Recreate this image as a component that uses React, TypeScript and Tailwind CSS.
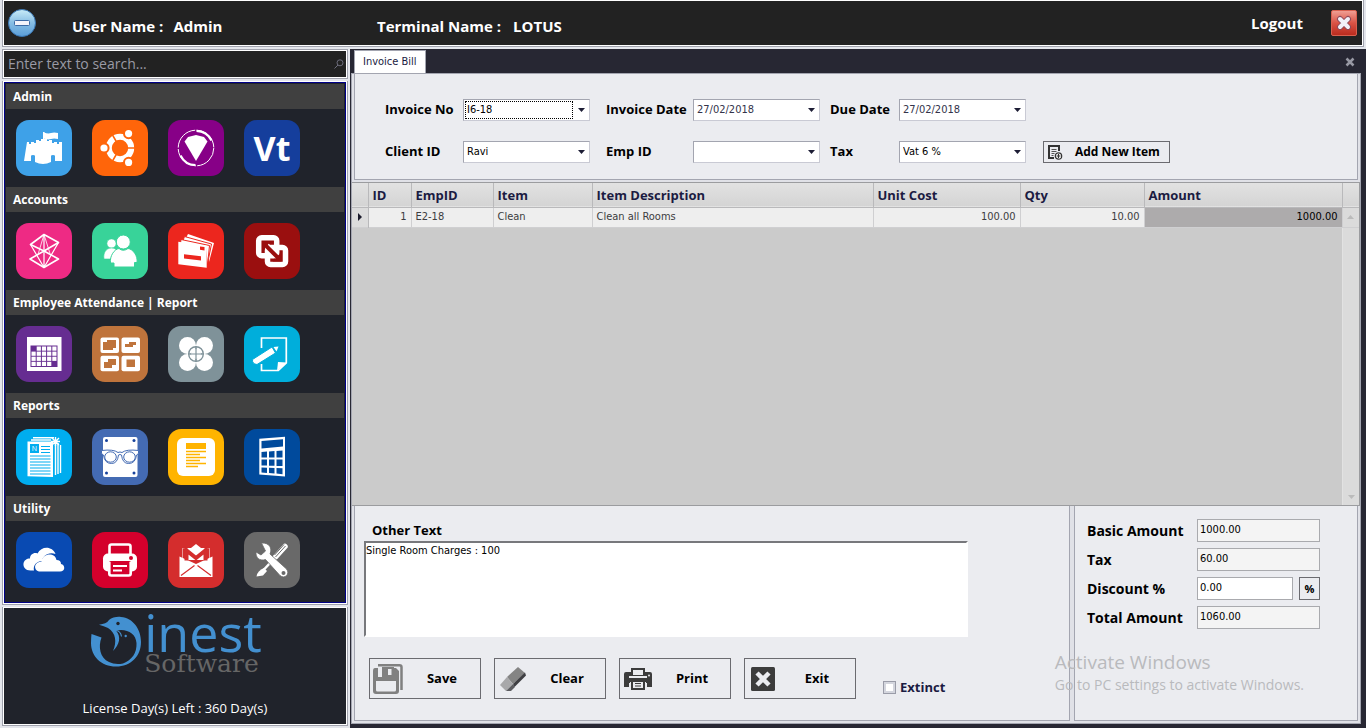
import React, { useState } from "react";

const Castle = () => (
  <>
    <path
      fill="#fff"
      d="M11 22h2v2h2v-2h3v1h2v-3h3v1h2v-2h6v2h2v-1h3v3h2v-1h3v2h2v-2h3v19h-7v-5q0-1-2-1t-2 1v6q-4 2-8 2t-8-2v-6q0-1-2-1t-2 1v5h-7z"
    />
    <path fill="#fff" d="M27 12h1.5v9H27z" />
    <path fill="#fff" d="M28 12.500q4 1.500 7 .5t7 0v6q-4-1-7 0t-7-.5z" />
  </>
);

const Circle = () => (
  <>
    <circle cx="28" cy="28" r="11.2" fill="none" stroke="#fff" strokeWidth="6" />
    <path stroke="#ff650a" strokeWidth="1.6" d="M28 28h18M28 28l-9-15.6M28 28l-9 15.6" />
    {[
      [12, 28],
      [36.6, 13.6],
      [36.6, 42.4],
    ].map(([x, y]) => (
      <circle key={`${x}-${y}`} cx={x} cy={y} r="4.6" fill="#fff" stroke="#ff650a" strokeWidth="2" />
    ))}
    <circle cx="28" cy="28" r="7.4" fill="#ff650a" />
  </>
);

const Gem = () => (
  <>
    <path fill="#fff" d="M16.500 21.500 20 17l8-2 8 2 3.500 4.500L28 41z" />
    <g fill="none" stroke="#fff">
      <circle cx="28" cy="28" r="17.800" strokeWidth="1" strokeDasharray="26.500 1.500" />
      <path strokeWidth="2.200" d="M28.500 10.800A17.200 17.200 0 0 1 43.500 20.500" />
      <path strokeWidth="2.200" d="M27.500 45.200A17.200 17.200 0 0 1 12.500 35.500" />
    </g>
  </>
);

const Letters = () => (
  <text
    x="28"
    y="41"
    textAnchor="middle"
    fill="#fff"
    fontSize="34"
    fontWeight="700"
    fontFamily="'Open Sans', sans-serif"
  >
    Vt
  </text>
);

const Polyhedron = () => (
  <g fill="none" stroke="#fff" strokeWidth="1.600" strokeLinejoin="round">
    <path d="M28 11.500 14.500 21.500 28 28l14.500-8.500zM14 36l14-8 14.500 8L28 44.500z" />
    <path d="M28 11.500v33M14.500 21.500 28 44.500l14.500-25" strokeWidth="1.200" />
    <path d="m28 11.500-6 20M28 11.500l6 19" strokeWidth=".8" />
  </g>
);

const People = () => (
  <g fill="#fff" stroke="#38d399">
    <circle cx="19.500" cy="20.500" r="4.600" strokeWidth=".6" />
    <path strokeWidth=".6" d="M12 36c-1-6 2-11 7.500-11s7 4 7 8l-5 3z" />
    <circle cx="31.300" cy="19" r="7" strokeWidth="1" />
    <path
      strokeWidth="1"
      d="M22 44v-4h-3.500c-1-7 4-14 8.500-14.500q4 3.500 9 0C41 26 46 33 45 39.500h-2.500V44z"
    />
  </g>
);

const Envelopes = () => (
  <>
    <path fill="#fff" d="m20 11 26 9-5 19-3-18-20-6z" />
    <path stroke="#ec261e" strokeWidth="1" fill="#fff" d="m16.500 13.500 27 7.500-4 20-3-18-22-4z" />
    <path stroke="#ec261e" strokeWidth="1" fill="#fff" d="m13 16.500 28.500 6-2 20-2-18-25-4z" />
    <path fill="#fff" d="m10.300 18.700 28.400 4v22l-28.400-3.400z" />
    <path fill="#ec261e" d="m32 23.500 4.500.6v3.300l-4.500-.6zM16 31.300l17 2v4.200l-17-2z" />
  </>
);

const Squares = () => (
  <>
    <g fill="none" stroke="#fff" strokeWidth="5.500">
      <rect x="14.700" y="14.700" width="18" height="18" rx="3" />
      <rect x="23.500" y="24.500" width="18" height="17" rx="3" />
    </g>
    <path stroke="#fff" strokeWidth="6" d="m22 22 13 13" />
    <path
      fill="#9a0f0f"
      d="M18 18.500h9l-3.200 3.200 10.500 10.500 3.200-3.200v9.500h-9l3.200-3.200-10.500-10.500-3.200 3.200z"
    />
  </>
);

const Calendar = () => (
  <>
    <path fill="#fff" d="M11 11h34.500v34H11z" />
    <path fill="#662d91" d="M14.500 19.500h27V41h-27z" />
    {[0, 1, 2, 3].map((row) =>
      [0, 1, 2, 3, 4].map((col) =>
        (row === 0 && col === 0) || (row === 3 && col === 4) ? null : (
          <rect
            key={`${row}${col}`}
            x={15.5 + col * 5.2}
            y={20.5 + row * 5.1}
            width="4.200"
            height="4.200"
            fill="#fff"
          />
        )
      )
    )}
  </>
);

const Boxes = () => (
  <>
    <g fill="#fff">
      <rect x="8.500" y="11.500" width="18.500" height="15.500" rx="2" />
      <rect x="29.500" y="11.500" width="18.500" height="15.500" rx="2" />
      <rect x="8.500" y="29.700" width="18.500" height="15.500" rx="2" />
      <rect x="29.500" y="29.700" width="18.500" height="15.500" rx="2" />
    </g>
    <path
      fill="#bf743c"
      d="M15 14h9v8h-3v2H11v-8h4zM37 16h7v3h-3v2h-8v-3h4zM16 33h8v6h-4v3h-8v-6h4zM34.500 33.500h8.500v7.500h-8.500z"
    />
  </>
);

const Drone = () => (
  <>
    <g fill="#fff">
      <circle cx="19.500" cy="19.500" r="8.500" />
      <circle cx="36.500" cy="19.500" r="8.500" />
      <circle cx="19.500" cy="36.500" r="8.500" />
      <circle cx="36.500" cy="36.500" r="8.500" />
    </g>
    <circle cx="28" cy="28" r="5" fill="#fff" />
    <circle cx="28" cy="28" r="7.300" fill="none" stroke="#7f9299" strokeWidth="1.400" />
    <path stroke="#7f9299" strokeWidth="1.200" d="M28 20.500v15M20.500 28h15" />
  </>
);

const NotePencil = () => (
  <>
    <path fill="none" stroke="#fff" strokeWidth="1.700" d="M17.500 22V12h24.800v25l-8 7.500H17.500V38" />
    <path fill="#fff" d="m33 45 1-9 9 .5z" />
    <path fill="#fff" stroke="#00aedb" d="M8.500 33.500 28 21l3.500 6L13 38.500q-5-.5-4.500-5z" />
    <path fill="#fff" d="m29.500 21 5-.5-2 5z" />
  </>
);

const Newspaper = () => (
  <>
    <path fill="none" stroke="#fff" strokeWidth="1.400" d="M15 11h20M17 8.800h21M39.500 12v34M42 14v31M44.500 16v28" />
    <path fill="#fff" d="M11.500 12.500H37V48l-25.500-.8z" />
    <path fill="#00adef" d="M14 15h9v9h-9z" />
    <text x="18.500" y="22" textAnchor="middle" fill="#fff" fontSize="7" fontFamily="'Open Sans', sans-serif">
      N
    </text>
    <path
      stroke="#00adef"
      strokeWidth="1.200"
      d="M25 17.500h9M25 20.500h9M25 23.500h9M14 27h20.500M14 30h20.500M14 33h20.500M14 36h20.500M14 39h20.500M14 42h20.500M14 45h20.500"
    />
    <path stroke="#fff" strokeWidth="1.400" d="m36 9 7 7m0-7-7 7m3.500-8v9m-4.500-4.500h9" />
  </>
);

const Glasses = () => (
  <>
    <rect x="11" y="8" width="34.500" height="40" rx="2" fill="#fff" />
    <g fill="#18439c">
      <circle cx="14.500" cy="11.500" r="1.500" />
      <circle cx="42" cy="11.500" r="1.500" />
      <circle cx="14.500" cy="44" r="1.500" />
      <circle cx="42" cy="44" r="1.500" />
    </g>
    <g fill="#fff" stroke="#446bb3" strokeWidth="1">
      <path d="M9.500 21.500q12-1.500 16.500 2 2-1 4 0 4.500-3.500 16.500-2v3l-2 1.500q-1 8.500-8 8.500-6 0-7-8.500-1.500-1-3 0-1 8.500-7 8.500-7 0-8-8.500l-2-1.500z" />
      <ellipse cx="18.500" cy="28" rx="5.800" ry="5.200" />
      <ellipse cx="37.500" cy="28" rx="5.800" ry="5.200" />
    </g>
  </>
);

const Document = () => (
  <>
    <rect x="9" y="9" width="38" height="38" rx="6" fill="#fff" />
    <path fill="#ffb400" d="M18 14h20v6H18z" />
    <path
      stroke="#ffb400"
      strokeWidth="1.300"
      d="M18 22.500h20M18 25.500h14M18 28.500h20M18 31.500h14M18 34.500h20M18 37.500h12"
    />
  </>
);

const Calculator = () => (
  <>
    <path fill="#fff" d="m15.300 9.800 25.700-2V47.500l-25.700-2z" />
    <path fill="#004a9c" d="m17.500 12 21.500-1.800v7.300l-21.500 2z" />
    <path
      fill="#004a9c"
      d="m17.500 23 5.500-.4v5.800h-5.500zM25 22.500l5.500-.4v6.300H25zM32.500 22l6-.4v6.800h-6zM17.500 30.500H23v6h-5.500zM25 30.500h5.500v6.300H25zM32.500 30.500h6v6.500h-6zM17.500 38.500l5.500.2v5.300l-5.500-.5zM25 38.800l5.500.2v5.600l-5.500-.5zM32.500 39l6 .2v6l-6-.6z"
    />
  </>
);

const Clouds = () => (
  <>
    <path
      fill="#fff"
      d="M18 38.500h-3.500c-5 0-7.500-3.500-7-7 .5-3 3-5 6.500-5 0-4 4-6.500 7.500-5 4-8 15-7.500 18 .5-8-2.500-13 3-13.500 7-6 .5-9 4.500-8 9.500z"
    />
    <path
      fill="#fff"
      d="M24 39.500c-6 0-7.500-9 1.500-10 1-8.500 13.500-9.500 15-1.500 3 0 4.500 1.500 4.500 4 4.500 1 4.500 7.500-1 7.500z"
    />
  </>
);

const PrinterTile = () => (
  <>
    <path fill="none" stroke="#fff" strokeWidth="2.600" d="M17.500 22v-7.500q0-2 2-2h17q2 0 2 2V22" />
    <rect x="11" y="21.500" width="34" height="18" rx="5" fill="#fff" />
    <rect x="17" y="29" width="22" height="16" rx="2" fill="#d4002c" />
    <path fill="none" stroke="#fff" strokeWidth="2.600" d="M17.300 30v11.500q0 2 2 2h17.400q2 0 2-2V30" />
    <path stroke="#fff" strokeWidth="2" d="M21 34h14M21 38.500h9" />
    <circle cx="39" cy="26" r="2" fill="#d4002c" />
  </>
);

const Mail = () => (
  <>
    <path fill="#fff" d="M14 16h28v12H14z" opacity=".5" />
    <path fill="#d42d2d" d="M15 16.500h26V29H15z" />
    <path fill="#fff" d="M19.500 16H23l5-4 5 4h3.500v12h-17z" />
    <path fill="#fff" d="M11.500 24.500 28 32l16.500-7.500V45h-33z" />
    <path fill="none" stroke="#d42d2d" strokeWidth="4" d="M18.500 28.500V18.500L28 26l9.500-7.500v10" />
    <path fill="none" stroke="#d42d2d" strokeWidth="1.200" d="m13 43.500 13.500-10M43 43.500 29.500 33.500" />
  </>
);

const Tools = () => (
  <>
    <path stroke="#fff" strokeWidth="5.500" strokeLinecap="round" d="M41 14.500 31.500 25" />
    <path stroke="#696969" strokeWidth="1" d="m41.500 14-10 11m8.500-12.500-9.500 10.500" />
    <path stroke="#fff" strokeWidth="2.500" d="M27 30 19.500 38" />
    <path fill="#fff" d="m20 36 3 3-4 4.500-6.500 1q1-6 7.500-8.500z" />
    <path
      fill="#fff"
      stroke="#696969"
      strokeWidth=".8"
      d="M17.500 11c8-.5 11 5.500 8.500 11l16.500 15c4 5-2 10.500-6.500 6.500L21.500 27.500c-6 2-10-2-9.500-7.500l5 3 4.500-4z"
    />
    <circle cx="39.500" cy="41" r="2" fill="#696969" />
  </>
);

const Bird = () => (
  <svg viewBox="0 0 52 52" className="h-13 w-13" aria-hidden="true">
    <path
      fill="#4390d0"
      d="M9 8.700C14 8 17 7 19 4c3-3 9-3.500 12-3 12 1 20 12 20 25 0 14-10 24.500-25 24.500S1 40 1 27q0-5 .5-9l10 3.500C8 31 10 42 19 46q6 3 14 1.500c9-3.500 14-10.500 13.500-20.500-.5-8-7-13-15.500-13l-5 .5c5.500 6.500 3.500 14-3 20.500 4-9 3-18-5-23q-4-2-9-3.300z"
    />
    <circle cx="28" cy="7.500" r="1.700" fill="#20232b" />
    <circle cx="35.700" cy="20" r="1.200" fill="#4390d0" />
    <path fill="none" stroke="#4390d0" strokeWidth="1.200" d="M26 14.500q4.500.5 5.500 6" />
  </svg>
);

const Arrow = ({ className = "" }: { className?: string }) => (
  <svg viewBox="0 0 7 4" className={`h-1 w-[7px] ${className}`} aria-hidden="true">
    <path fill="currentColor" d="M0 0h7L3.500 4z" />
  </svg>
);

const SelectField = ({
  id,
  options,
  focused,
}: {
  id: string;
  options: string[];
  focused?: boolean;
}) => (
  <div className="relative w-[127px]">
    <select
      id={id}
      className="block h-[22px] w-full appearance-none border border-[#c9cad4] border-t-[#a3a5b0] border-l-[#a3a5b0] bg-white px-[3px] font-['DejaVu_Sans_Condensed','Noto_Sans',sans-serif] text-[11px] font-normal leading-5 text-black outline-none"
    >
      {options.map((option) => (
        <option key={option}>{option}</option>
      ))}
    </select>
    {focused && (
      <span className="pointer-events-none absolute inset-y-0.5 left-0.5 right-[17px] border border-dotted border-black" />
    )}
    <Arrow className="pointer-events-none absolute right-[5px] top-[9px] text-[#1d1d35]" />
  </div>
);

const DateField = ({ id, value }: { id: string; value: string }) => (
  <div className="flex h-[22px] w-[127px] items-center border border-[#c9cad4] border-t-[#a3a5b0] border-l-[#a3a5b0] bg-white pr-1">
    <input
      id={id}
      defaultValue={value}
      className="min-w-0 flex-1 px-[3px] font-['DejaVu_Sans_Condensed','Noto_Sans',sans-serif] text-[11px] font-normal text-[#33334a] outline-none"
    />
    <button type="button" aria-label="Open calendar" className="flex h-full items-center">
      <Arrow className="text-[#1d1d35]" />
    </button>
  </div>
);

const Sidebar = () => (
  <aside className="flex w-[350px] shrink-0 flex-col gap-0.5 px-0.5 pb-0.5">
    <div className="border border-[#a0a2ad] bg-white p-px">
      <label className="flex h-[26px] items-center bg-[#222] px-0.5">
        <input
          type="search"
          aria-label="Search"
          placeholder="Enter text to search..."
          className="min-w-0 flex-1 bg-transparent pl-0.5 text-sm text-white outline-none placeholder:text-[#9a9aa5]"
        />
        <svg viewBox="0 0 10 10" className="h-2.5 w-2.5" fill="none" stroke="#6d6d7c" aria-hidden="true">
          <circle cx="6" cy="3.800" r="3" />
          <path d="M4 6 .5 9.500" />
        </svg>
      </label>
    </div>

    <div className="flex-1 border border-t-0 border-[#a0a2ad] bg-white p-px">
      <nav className="h-full border border-[#000087] bg-[#20232b] p-px">
        {sections.map((section) => (
          <section key={section.title}>
            <h2 className="h-[25px] bg-[#404040] pl-[7px] pt-px text-xs font-bold leading-6 text-white">
              {section.title}
            </h2>
            <div className="flex gap-5 px-2.5 py-[11px]">
              {section.tiles.map((tile) => (
                <button key={tile.name} type="button" aria-label={tile.name}>
                  <svg viewBox="0 0 56 56" className="block h-14 w-14">
                    <rect width="56" height="56" rx="13" fill={tile.color} />
                    <tile.Icon />
                  </svg>
                </button>
              ))}
            </div>
          </section>
        ))}
      </nav>
    </div>

    <div className="border border-t-0 border-[#a0a2ad] bg-white p-px">
      <div className="flex h-[116px] flex-col items-center bg-[#20232b]">
        <div className="flex h-[86px] items-start pl-0.5 pt-2">
          <Bird />
          <div className="ml-0.5">
            <p className="text-[52px] leading-8 text-[#4390d0]">inest</p>
            <p className="pt-1 font-['DejaVu_Serif',serif] text-[25px] leading-6 text-[#666]">
              Software
            </p>
          </div>
        </div>
        <p className="text-[13px] leading-7 text-white">License Day(s) Left : 360 Day(s)</p>
      </div>
    </div>
  </aside>
);

const InvoiceForm = () => (
  <form className="mx-0.5 mb-0.5 border border-[#a3a5b0] border-t-0 bg-[#ebecf0] pb-4 pl-[30px] pt-[25px]">
    <div className="grid grid-cols-[78px_143px_87px_137px_69px_144px_127px] items-center gap-y-5 text-[13px] font-bold">
      <label htmlFor="invoice-no">Invoice No</label>
      <SelectField id="invoice-no" options={["I6-18"]} focused />
      <label htmlFor="invoice-date">Invoice Date</label>
      <DateField id="invoice-date" value="27/02/2018" />
      <label htmlFor="due-date">Due Date</label>
      <DateField id="due-date" value="27/02/2018" />
      <span />
      <label htmlFor="client-id">Client ID</label>
      <SelectField id="client-id" options={["Ravi"]} />
      <label htmlFor="emp-id">Emp ID</label>
      <SelectField id="emp-id" options={[""]} />
      <label htmlFor="tax-rate">Tax</label>
      <SelectField id="tax-rate" options={["Vat 6 %"]} />
      <button
        type="button"
        className="flex h-[22px] items-center gap-3 border border-[#6b6b70] px-1 text-xs font-bold"
      >
        <svg viewBox="0 0 15 15" className="h-[15px] w-[15px]" aria-hidden="true">
          <path fill="none" stroke="#333" strokeWidth="2" d="M6 13H1V1h10v5" />
          <path stroke="#555" d="M3.500 4.500h5M3.500 6.500h5M3.500 8.500h3M3.500 10.500h2" />
          <circle cx="10.500" cy="11" r="3.200" fill="#fff" stroke="#333" strokeWidth="1.200" />
          <path stroke="#333" strokeWidth="1.200" d="M8.500 11h4M10.500 9v4" />
        </svg>
        Add New Item
      </button>
    </div>
  </form>
);

const headClass =
  "border-r border-[#b9b9bb] pl-1 text-left align-middle text-[13px] leading-5 font-bold text-[#1b1b42]";
const cellClass = "border-r border-[#cfcfd1] px-1";

const ItemsTable = () => (
  <div className="flex flex-1 flex-col border border-[#9b9c9f] border-l-0 bg-[#cbcbcb]">
    <table className="w-full table-fixed border-collapse">
      <colgroup>
        <col className="w-4" />
        <col className="w-[43px]" />
        <col className="w-[82px]" />
        <col className="w-[99px]" />
        <col />
        <col className="w-[147px]" />
        <col className="w-[124px]" />
        <col className="w-[198px]" />
        <col className="w-[17px]" />
      </colgroup>
      <thead>
        <tr className="h-6 border-b border-[#b9b9bb] bg-linear-to-b from-[#e2e2e2] to-[#d4d4d4]">
          <th className={headClass} />
          {columns.map((column) => (
            <th key={column} scope="col" className={headClass}>
              {column}
            </th>
          ))}
          <th />
        </tr>
      </thead>
      <tbody>
        <tr className="h-5 border-b border-[#cfcfd1] bg-[#eee] font-['DejaVu_Sans_Condensed','Noto_Sans',sans-serif] text-[11px] leading-4 text-[#3c3c40]">
          <td className="border-r border-[#b9b9bb] bg-[#dcdcdc]">
            <svg viewBox="0 0 4 8" className="mx-auto h-2 w-1" aria-hidden="true">
              <path fill="#1b1b2c" d="M0 0v8l4-4z" />
            </svg>
          </td>
          <td className={`${cellClass} text-right`}>1</td>
          <td className={cellClass}>E2-18</td>
          <td className={cellClass}>Clean</td>
          <td className={cellClass}>Clean all Rooms</td>
          <td className={`${cellClass} text-right`}>100.00</td>
          <td className={`${cellClass} text-right`}>10.00</td>
          <td className={`${cellClass} bg-[#adabac] text-right text-black`}>1000.00</td>
          <td className="bg-[#dbdbdb]">
            <Arrow className="mx-auto rotate-180 text-[#bbb]" />
          </td>
        </tr>
      </tbody>
    </table>
    <div className="flex flex-1">
      <div className="flex-1" />
      <div className="flex w-[17px] flex-col items-center justify-end border-l border-[#e2e2e2] bg-[#dbdbdb] pb-1.5">
        <Arrow className="text-[#bbb]" />
      </div>
    </div>
  </div>
);

const OtherText = () => {
  const [extinct, setExtinct] = useState(false);

  return (
    <div className="flex-1 border border-t-0 border-[#a3a5b0] bg-[#ebecf0] pb-5 pl-[9px] pr-5 pt-3.5">
      <label htmlFor="other-text" className="block pb-px pl-2 text-[13px] font-bold leading-5">
        Other Text
      </label>
      <textarea
        id="other-text"
        defaultValue="Single Room Charges : 100"
        className="block h-24 w-full max-w-[604px] resize-none border-2 border-white border-l-[#77787c] border-t-[#77787c] bg-white font-['DejaVu_Sans_Condensed','Noto_Sans',sans-serif] text-[11px] leading-4 text-black outline-none"
      />
      <div className="mb-px mt-[21px] flex items-start gap-[13px] pl-[5px]">
        {actions.map(({ label, icon }) => (
          <button
            key={label}
            type="button"
            className="flex h-[41px] w-28 items-center border border-[#6b6b70] pl-0.5 text-[13px] font-bold"
          >
            {icon}
            <span className="flex-1 text-center">{label}</span>
          </button>
        ))}
        <label className="ml-3.5 mt-5 flex items-center gap-1 text-[13px] font-bold leading-[18px] text-[#1b1b42]">
          <input
            type="checkbox"
            checked={extinct}
            onChange={(e) => setExtinct(e.target.checked)}
            className="h-[13px] w-[13px] appearance-none border border-[#9a9ca8] bg-white shadow-[inset_0_0_0_2px_#d4d6de] checked:bg-[#1b1b42]"
          />
          Extinct
        </label>
      </div>
    </div>
  );
};

const amountInput =
  "h-[23px] border border-[#a9aaae] px-0.5 pb-0.5 font-['DejaVu_Sans_Condensed','Noto_Sans',sans-serif] text-[11px] font-normal text-black outline-none";

const Totals = () => (
  <div className="w-[284px] border border-t-0 border-[#a3a5b0] bg-[#ebecf0] pl-3 pt-[13px]">
    <div className="grid grid-cols-[110px_123px] items-center gap-y-1.5 text-sm font-bold">
      <label htmlFor="basic">Basic Amount</label>
      <input id="basic" readOnly value="1000.00" className={`${amountInput} bg-[#f4f4f4]`} />
      <label htmlFor="tax">Tax</label>
      <input id="tax" readOnly value="60.00" className={`${amountInput} bg-[#f4f4f4]`} />
      <label htmlFor="discount">Discount %</label>
      <div className="flex gap-1.5">
        <input id="discount" defaultValue="0.00" className={`${amountInput} w-24 bg-white`} />
        <button type="button" className="h-[23px] flex-1 border border-[#6b6b70] text-[11px] font-bold">
          %
        </button>
      </div>
      <label htmlFor="total">Total Amount</label>
      <input id="total" readOnly value="1060.00" className={`${amountInput} bg-[#f4f4f4]`} />
    </div>
  </div>
);

const App = () => {
  return (
    <div className="relative flex min-h-screen flex-col bg-[#e4e6ec] font-['Open_Sans',sans-serif] text-black">
      <header className="mx-0.5 mb-0.5 border border-t-0 border-[#a0a2ad] bg-white px-px pb-px pt-px">
        <div className="flex h-11 items-center bg-[#222] pl-1 pr-[5px] text-[15px] font-bold text-white">
          <button type="button" aria-label="Minimize">
            <svg viewBox="0 0 28 28" className="h-7 w-7">
              <defs>
                <linearGradient id="minimize" x1="0" x2="0" y1="0" y2="1">
                  <stop offset="0" stopColor="#c9ecf8" />
                  <stop offset=".5" stopColor="#86bde4" />
                  <stop offset="1" stopColor="#5a9dd8" />
                </linearGradient>
              </defs>
              <circle cx="14" cy="14" r="13.500" fill="url(#minimize)" stroke="#3976b4" />
              <rect x="6.500" y="11.500" width="15" height="5" rx="1" fill="#f3f3fa" stroke="#3c6aa5" />
            </svg>
          </button>
          <p className="flex w-[305px] gap-2.5 pl-9 pt-1.5">
            <span>User Name :</span>
            <span>Admin</span>
          </p>
          <p className="flex flex-1 gap-3 pl-9 pt-1.5">
            <span>Terminal Name :</span>
            <span>LOTUS</span>
          </p>
          <a href="#logout" className="mr-7">
            Logout
          </a>
          <button type="button" aria-label="Close">
            <svg viewBox="0 0 26 26" className="h-[26px] w-[26px]">
              <defs>
                <linearGradient id="close" x1="0" x2="0" y1="0" y2="1">
                  <stop offset="0" stopColor="#f0a196" />
                  <stop offset=".5" stopColor="#d95345" />
                  <stop offset="1" stopColor="#b92a1d" />
                </linearGradient>
              </defs>
              <rect x=".5" y=".5" width="25" height="25" rx="1.500" fill="url(#close)" stroke="#d8604f" />
              <path stroke="#8d4a5a" strokeWidth="6" strokeLinecap="round" d="m9 9 8 8m0-8-8 8" />
              <path stroke="#f1f1f8" strokeWidth="4" strokeLinecap="round" d="m9 9 8 8m0-8-8 8" />
            </svg>
          </button>
        </div>
      </header>

      <div className="flex flex-1">
        <Sidebar />

        <main className="flex min-w-0 flex-1 flex-col bg-[#272733] pb-1 pl-px pr-[5px]">
          <div className="flex h-6 items-end justify-between pl-[3px]">
            <h1 className="h-[23px] border border-b-0 border-[#a3a5b0] bg-white px-2 font-['DejaVu_Sans_Condensed','Noto_Sans',sans-serif] text-[11px] leading-[22px] text-[#1b1b42]">
              Invoice Bill
            </h1>
            <button type="button" aria-label="Close tab" className="mb-1.5 mr-1.5">
              <svg viewBox="0 0 10 10" className="h-2.5 w-2.5" aria-hidden="true">
                <path stroke="#9899a4" strokeWidth="2.500" d="m1.500 1.500 7 7m0-7-7 7" />
              </svg>
            </button>
          </div>
          <div className="flex flex-1 flex-col border border-[#a3a5b0] bg-[#e0e1e7]">
            <InvoiceForm />
            <ItemsTable />
            <div className="mx-0.5 mb-0.5 flex gap-1">
              <OtherText />
              <Totals />
            </div>
          </div>
        </main>
      </div>

      <div className="pointer-events-none absolute bottom-[33px] right-[62px] text-[#b9babd]">
        <p className="text-[19px] leading-6">Activate Windows</p>
        <p className="text-sm leading-[21px]">Go to PC settings to activate Windows.</p>
      </div>
    </div>
  );
};

const columns = ["ID", "EmpID", "Item", "Item Description", "Unit Cost", "Qty", "Amount"];

const sections = [
  {
    title: "Admin",
    tiles: [
      { name: "Company", color: "#3ea1e8", Icon: Castle },
      { name: "Users", color: "#ff650a", Icon: Circle },
      { name: "Items", color: "#870087", Icon: Gem },
      { name: "Vat", color: "#153e9c", Icon: Letters },
    ],
  },
  {
    title: "Accounts",
    tiles: [
      { name: "Ledger", color: "#ee2a84", Icon: Polyhedron },
      { name: "Clients", color: "#38d399", Icon: People },
      { name: "Invoices", color: "#ec261e", Icon: Envelopes },
      { name: "Transfers", color: "#9a0f0f", Icon: Squares },
    ],
  },
  {
    title: "Employee Attendance | Report",
    tiles: [
      { name: "Attendance", color: "#662d91", Icon: Calendar },
      { name: "Rooms", color: "#bf743c", Icon: Boxes },
      { name: "Teams", color: "#7f9299", Icon: Drone },
      { name: "Notes", color: "#00aedb", Icon: NotePencil },
    ],
  },
  {
    title: "Reports",
    tiles: [
      { name: "News", color: "#00adef", Icon: Newspaper },
      { name: "Review", color: "#446bb3", Icon: Glasses },
      { name: "Statement", color: "#ffb400", Icon: Document },
      { name: "Calculator", color: "#004a9c", Icon: Calculator },
    ],
  },
  {
    title: "Utility",
    tiles: [
      { name: "Backup", color: "#094ab2", Icon: Clouds },
      { name: "Printer", color: "#d4002c", Icon: PrinterTile },
      { name: "Mail", color: "#d42d2d", Icon: Mail },
      { name: "Settings", color: "#696969", Icon: Tools },
    ],
  },
];

const actions = [
  {
    label: "Save",
    icon: (
      <svg viewBox="0 0 32 32" className="h-8 w-8" aria-hidden="true">
        <path fill="none" stroke="#808080" strokeWidth="2.500" d="M6 2.300h21.500q2 0 2 2V27" />
        <path fill="#808080" d="M3 5h3v9h16V5h2l3 3v20q0 3-3 3H4q-3 0-3-3V8q0-3 2-3z" />
        <path fill="#ebecf0" d="M4 18h20v9q0 1.500-1.500 1.500h-17Q4 28.500 4 27z" />
        <path fill="#808080" d="M10 4h12v10H10z" />
        <path fill="#ebecf0" d="M16 6h3.500v6H16z" />
      </svg>
    ),
  },
  {
    label: "Clear",
    icon: (
      <svg viewBox="0 0 32 32" className="h-8 w-8" aria-hidden="true">
        <path fill="#848484" d="m21 4 7 6-12 11-6-7z" />
        <path fill="#3f3f43" d="m28 9.500 1 3L17.500 24 16 21z" />
        <path fill="#a8a8aa" d="m10 14 6 7-7 7-6-6z" />
        <path fill="#5c5c60" d="m16 21-7 7h5l4-4z" />
      </svg>
    ),
  },
  {
    label: "Print",
    icon: (
      <svg viewBox="0 0 32 32" className="h-8 w-8" aria-hidden="true">
        <path fill="#3c3c3c" d="M4 9h24q2 0 2 2v13h-5v-4H7v4H2V11q0-2 2-2z" />
        <path fill="#ebecf0" stroke="#3c3c3c" strokeWidth="2" d="M10 6h12v7H10z" />
        <path fill="#ebecf0" d="M7 13h18v2H7zM8 19h16v8H8z" />
        <path fill="none" stroke="#3c3c3c" strokeWidth="2" d="M10 19v7h12v-7" />
        <path stroke="#3c3c3c" d="M13 20.500h6M13 23h6" />
        <circle cx="27" cy="12.500" r="1" fill="#ebecf0" />
      </svg>
    ),
  },
  {
    label: "Exit",
    icon: (
      <svg viewBox="0 0 32 32" className="h-8 w-8" aria-hidden="true">
        <rect x="4" y="4" width="24" height="24" rx="1.500" fill="#3c3c3c" />
        <path stroke="#ebecf0" strokeWidth="4.500" d="m10 10 12 12m0-12L10 22" />
      </svg>
    ),
  },
];

export default App;
